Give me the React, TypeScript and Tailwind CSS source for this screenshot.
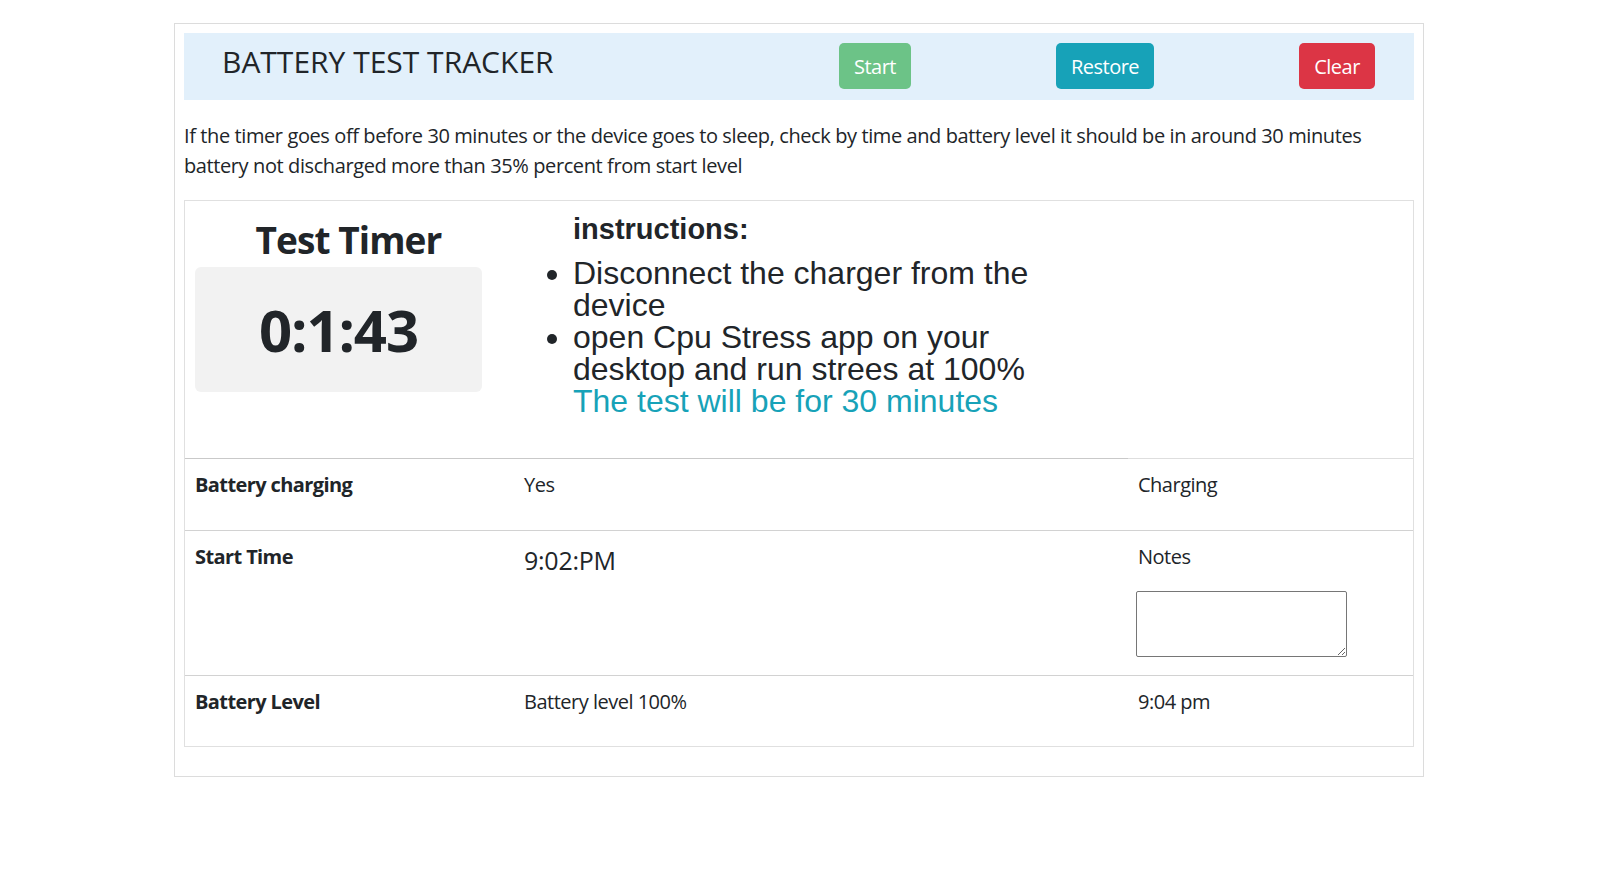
import { useState } from "react"

const sans = { fontFamily: '"Open Sans", "Noto Sans", sans-serif' }

function Row({ label, value, extra, big }: { label: string; value: string; extra: React.ReactNode; big?: boolean }) {
  return (
    <div className="grid grid-cols-[327px_614px_1fr] border-t border-[#d2d2d2]">
      <div className="pl-[10px] pr-3 pt-[11px] pb-[13px]">
        <p className="text-[20px] leading-[30px] font-bold tracking-[-0.03em] mb-4">{label}</p>
      </div>
      <div className="px-3 pt-[11px] pb-[13px]">
        <p className={big ? "text-[25px] leading-[30px] tracking-[-0.01em] pt-[3px]" : "text-[20px] leading-[30px] tracking-[-0.025em] mb-4"}>{value}</p>
      </div>
      <div className="px-3 pt-[11px] pb-[13px]">{extra}</div>
    </div>
  )
}

export default function App() {
  const [notes, setNotes] = useState("")

  return (
    <div className="min-h-screen bg-white text-[#212529]" style={sans}>
      <div className="ml-[174px] mt-[23px] w-[1250px] border border-[#dcdcdc] p-[9px] pb-[29px]">
        {/* header */}
        <div className="flex items-start h-[67px] bg-[#e2f0fb] pt-[10px]">
          <h3 className="w-[655px] pl-[38px] text-[30px] leading-[36px] font-medium pt-[1px]">BATTERY TEST TRACKER</h3>
          <button className="w-[72px] h-[46px] pt-[2px] rounded-[5px] bg-[#6cc387] text-white text-[20px] tracking-[-0.025em]">Start</button>
          <button className="ml-[145px] w-[98px] h-[46px] pt-[2px] rounded-[5px] bg-[#17a2b8] text-white text-[20px] tracking-[-0.025em]">Restore</button>
          <button className="ml-[145px] w-[76px] h-[46px] pt-[2px] rounded-[5px] bg-[#dc3545] text-white text-[20px] tracking-[-0.025em]">Clear</button>
        </div>

        <p className="mt-[21px] mb-[19px] text-[20px] leading-[30px] font-normal tracking-[-0.02em]">
          If the timer goes off before 30 minutes or the device goes to sleep, check by time and battery level it should be in around 30 minutes battery not discharged more than 35% percent from start level
        </p>

        {/* table */}
        <div className="border border-[#e0e0e0]">
          <div className="flex h-[257px]">
            <div className="w-[317px] pl-[10px] pt-[16px]">
              <h1 className="text-center text-[37px] leading-[46px] font-bold tracking-[-0.025em]">Test Timer</h1>
              <div className="mt-[4px] w-[287px] h-[125px] rounded-[6px] bg-[#f2f2f2] flex items-center justify-center">
                <span className="text-[58px] font-bold tracking-[-0.02em] leading-none">0:1:43</span>
              </div>
            </div>
            <div className="ml-[71px] w-[480px] pt-[11px]" style={{ fontFamily: '"Liberation Sans", Arial, sans-serif' }}>
              <h3 className="text-[29px] leading-[34px] font-bold">instructions:</h3>
              <ul className="mt-[11px] list-disc text-[32px] leading-[32px]">
                <li>Disconnect the charger from the device</li>
                <li>
                  open Cpu Stress app on your desktop and run strees at 100%
                  <br />
                  <span className="text-[#17a2b8]">The test will be for 30 minutes</span>
                </li>
              </ul>
            </div>
          </div>
          <div className="flex h-px">
            <div className="w-[943px] bg-[#c9c9c9]" />
            <div className="flex-1 bg-[#dedede]" />
          </div>

          <div className="grid grid-cols-[327px_614px_1fr]">
            <div className="pl-[10px] pr-3 pt-[11px] pb-[14px]">
              <p className="text-[20px] leading-[30px] font-bold tracking-[-0.03em] mb-4">Battery charging</p>
            </div>
            <div className="px-3 pt-[11px] pb-[14px]">
              <p className="text-[20px] leading-[30px] tracking-[-0.025em] mb-4">Yes</p>
            </div>
            <div className="px-3 pt-[11px] pb-[14px]">
              <p className="text-[20px] leading-[30px] tracking-[-0.025em] mb-4">Charging</p>
            </div>
          </div>

          <Row
            label="Start Time"
            value="9:02:PM"
            big
            extra={
              <div>
                <p className="text-[20px] leading-[30px] tracking-[-0.025em]">Notes</p>
                <textarea
                  value={notes}
                  onChange={(e) => setNotes(e.target.value)}
                  className="mt-[19px] -ml-[2px] block w-[211px] h-[66px] border border-[#767676] rounded-[2px] mb-[5px]"
                />
              </div>
            }
          />

          <Row
            label="Battery Level"
            value="Battery level 100%"
            extra={<p className="text-[20px] leading-[30px] tracking-[-0.025em] mb-4">9:04 pm</p>}
          />
        </div>
      </div>
    </div>
  )
}
